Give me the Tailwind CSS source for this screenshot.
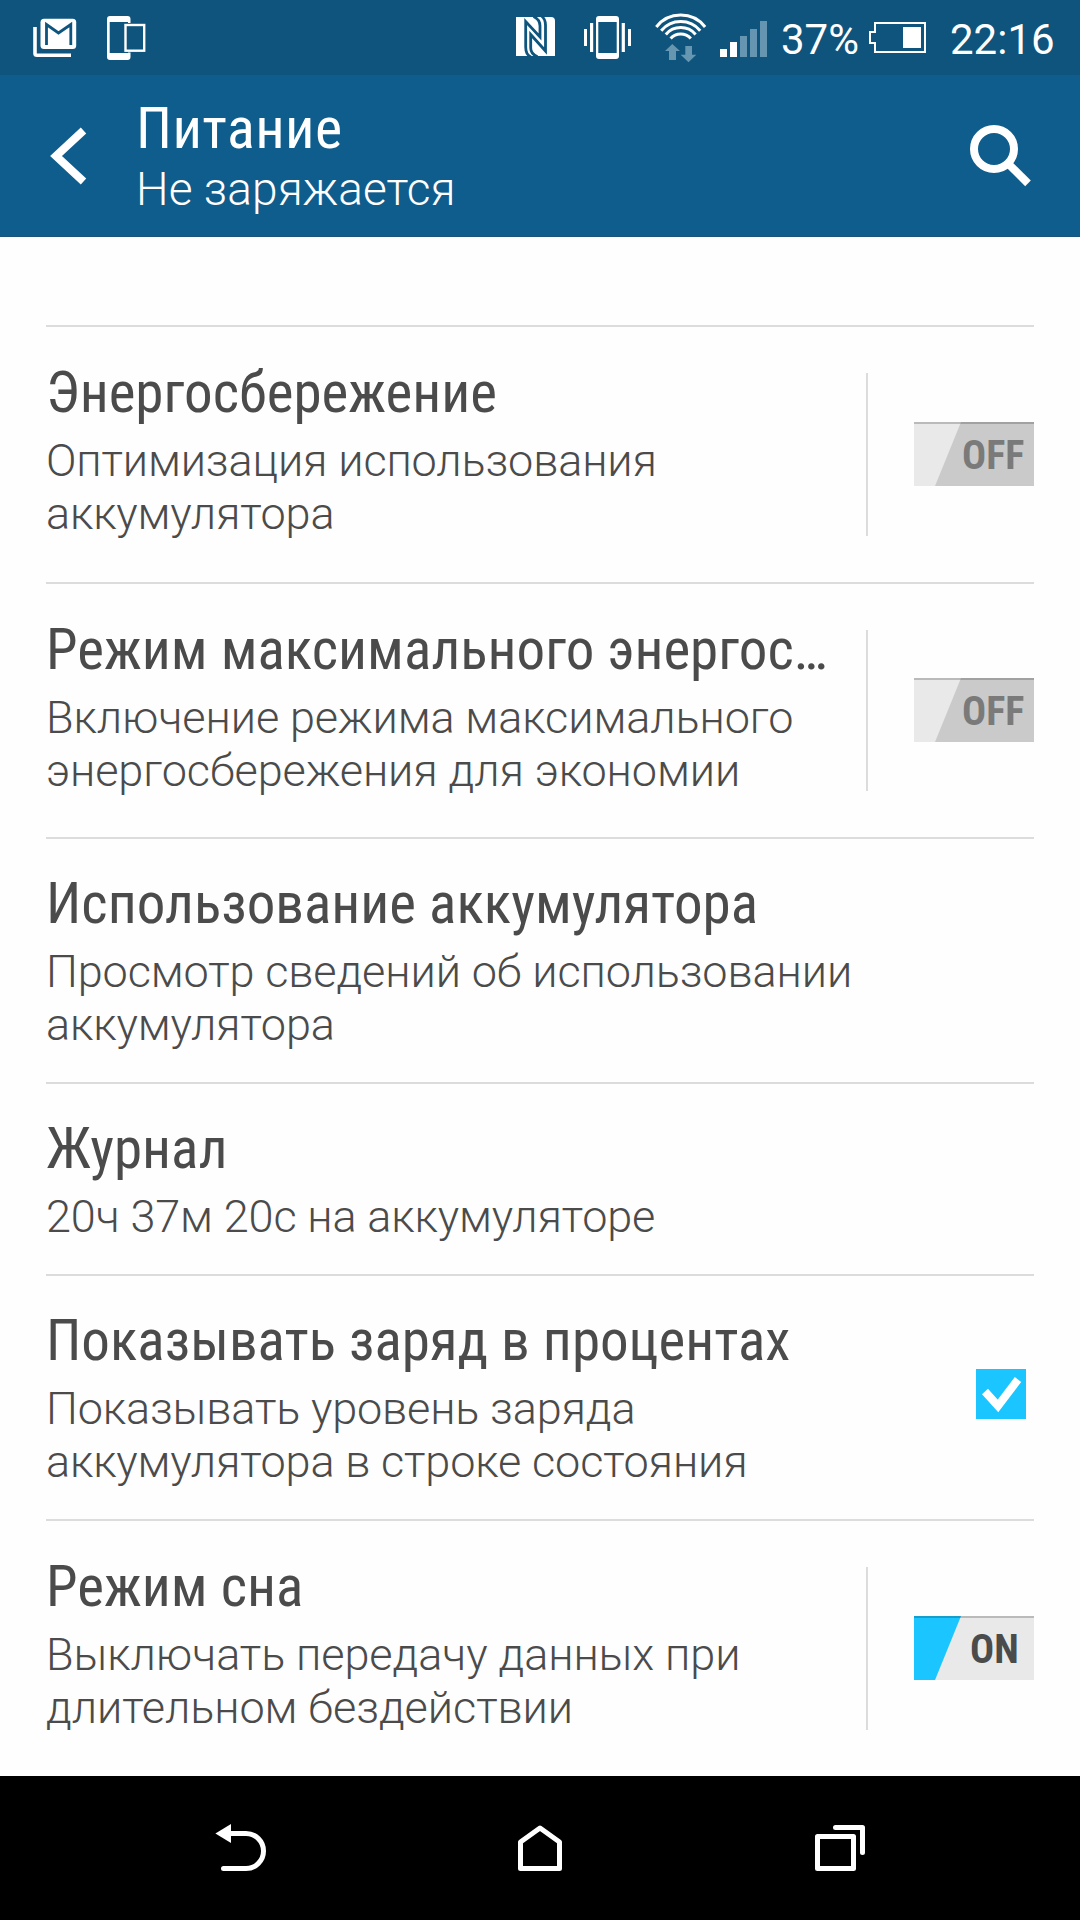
<!DOCTYPE html>
<html lang="ru">
<head>
    <meta charset="UTF-8">
    <meta name="viewport" content="width=device-width, initial-scale=1.0">
    <title>Питание</title>
    <script src="https://cdn.jsdelivr.net/npm/@tailwindcss/browser@4"></script>
</head>

<body class="bg-white">
<div class="w-[1080px] h-[1920px] flex flex-col overflow-hidden bg-[#fefefe] font-['Roboto',sans-serif] text-[#4b4b4b]">

    <!-- Status bar -->
    <div class="h-[75px] shrink-0 bg-[#0e547d] text-white flex items-start">
        <svg class="w-[44px] h-[75px] ml-[33px]" viewBox="33 0 44 75" fill="none">
            <path d="M35 27V53.500Q35 55.200 37 55.200H71" stroke="#fff" stroke-width="3.600"/>
            <rect x="40.500" y="18.700" width="35.700" height="30.300" rx="3.500" fill="#fff"/>
            <path d="M46.500 45V24.500L58.500 33L70.800 24.500V45" stroke="#0e547d" stroke-width="2.800"/>
        </svg>
        <svg class="w-[40px] h-[75px] ml-[30px]" viewBox="107 0 40 75">
            <path fill="#fff" fill-rule="evenodd" d="M110 16H127.500Q130.500 16 130.500 19V57Q130.500 60 127.500 60H110Q107 60 107 57V19Q107 16 110 16ZM109.700 22V53H128V22Z"/>
            <rect x="123.500" y="23" width="22" height="29.500" fill="#0e547d"/>
            <rect x="125.500" y="25" width="18.700" height="25.700" fill="none" stroke="#fff" stroke-width="2.400"/>
        </svg>

        <div class="flex items-start ml-auto">
            <svg class="w-[39px] h-[75px]" viewBox="0 -17 39 75" fill="none">
                <path d="M0 0H35Q39 0 39 4V39H0Z" fill="#fff"/>
                <path d="M15 40Q9.700 38 9.700 30V4.500L24 20V9Q24 2.500 17.500 -0.500" stroke="#0e547d" stroke-width="2.800"/>
                <path d="M21.500 39.800Q14.700 37 14.700 31V17.500L29.500 34V8Q29.500 2 25.500 -1" stroke="#0e547d" stroke-width="2.800"/>
            </svg>
            <svg class="w-[47px] h-[75px] ml-[29px]" viewBox="584 0 47 75" fill="#fff">
                <path fill-rule="evenodd" d="M599 16H616Q619 16 619 19V56Q619 59 616 59H599Q596 59 596 56V19Q596 16 599 16ZM598.300 22V53H616.700V22Z"/>
                <path d="M584 29h3v17h-3zM590 23h3.200v29H590zM621.700 23h3.200v29h-3.200zM628 29h3v17h-3z"/>
            </svg>
            <svg class="w-[52px] h-[75px] ml-[24px]" viewBox="655 0 52 75" fill="none" stroke="#fff" stroke-width="3">
                <path d="M656.300 27A31 31 0 0 1 705.100 27"/>
                <path d="M661.200 30.700A25.300 25.300 0 0 1 700.200 30.700"/>
                <path d="M665.800 34.500A19.500 19.500 0 0 1 695.600 34.500"/>
                <path d="M670.600 38.500A13.500 13.500 0 0 1 690.800 38.500"/>
                <path d="M672.300 44L680 51H676V60H669V51H665ZM685.300 46H692V54.700H696.300L688.500 62.300L680.700 54.700H685.300Z" fill="#6796b0" stroke="none"/>
            </svg>
            <svg class="w-[47px] h-[75px] ml-[13px]" viewBox="720 0 47 75">
                <path fill="#fff" d="M720 49h7v8h-7zM730 42h7v15h-7z"/>
                <path fill="#6695b1" d="M740 36h7v21h-7zM750 29h7v28h-7zM760 21h7v36h-7z"/>
            </svg>
            <span class="w-[88px] ml-[14px] mt-[15px] text-[42px] leading-[50px]">37%</span>
            <svg class="w-[57px] h-[75px]" viewBox="869 0 57 75">
                <path fill="none" stroke="#fff" stroke-width="2" d="M875 23H925V52H875V43H870V32H875Z"/>
                <path fill="#fff" d="M903 27h18v21h-18z"/>
            </svg>
            <span class="w-[130px] ml-[24px] mt-[15px] text-[42px] leading-[50px]">22:16</span>
        </div>
    </div>

    <!-- Header -->
    <div class="h-[162px] shrink-0 bg-[#0e5d8d] border-b border-[#1a537b] text-white flex items-start">
        <svg class="w-[38px] h-[60px] ml-[49px] mt-[51px]" viewBox="49 126 38 60" fill="none" stroke="#fff" stroke-width="8">
            <path d="M83.500 130.500L56 156L83.500 181.500"/>
        </svg>
        <div class="ml-[49px] mt-5 flex-1">
            <h1 class="text-[58px] leading-[66px] font-stretch-75% tracking-[0.4px]">Питание</h1>
            <p class="mt-px text-[46px] leading-[54px] font-light tracking-[0.1px]">Не заряжается</p>
        </div>
        <svg class="w-[64px] h-[64px] mr-[47px] mt-[48px]" viewBox="969 123 64 64" fill="none" stroke="#fff" stroke-width="8">
            <circle cx="994" cy="149" r="20"/>
            <path d="M1008 163.500L1028 183.300"/>
        </svg>
    </div>

    <!-- Settings list -->
    <div class="flex-1 px-[46px] pt-[88px]">
        <div class="h-[257px] border-t-2 border-[#dcdcdc] flex">
            <div class="flex-1 min-w-0 pt-[33px] pr-[38px]">
                <h2 class="text-[57px] leading-[66px] font-stretch-75% truncate">Энергосбережение</h2>
                <p class="mt-2 text-[45px] leading-[53px] font-light tracking-[-0.15px]">Оптимизация использования<br>аккумулятора</p>
            </div>
            <div class="w-[168px] mt-[46px] mb-[46px] border-l-2 border-[#dcdcdc] flex items-center justify-end">
                <div class="relative w-[120px] h-[64px] mb-0.5">
                    <svg class="absolute inset-0" width="120" height="64">
                        <path fill="#cacaca" d="M0 0H120V64H0Z"/>
                        <path fill="#e9e9e9" d="M0 0H47L21 64H0Z"/>
                        <path fill="#000" fill-opacity=".2" d="M0 0H120V2H0Z"/>
                    </svg>
                    <span class="relative block pl-[48px] pt-[11px] text-[40px] leading-[46px] font-bold font-stretch-75% text-[#7a7a7a]">OFF</span>
                </div>
            </div>
        </div>

        <div class="h-[255px] border-t-2 border-[#dcdcdc] flex">
            <div class="flex-1 min-w-0 pt-[33px] pr-[38px]">
                <h2 class="text-[57px] leading-[66px] font-stretch-75% truncate">Режим максимального энергос…</h2>
                <p class="mt-2 text-[45px] leading-[53px] font-light tracking-[-0.1px]">Включение режима максимального<br>энергосбережения для экономии</p>
            </div>
            <div class="w-[168px] mt-[46px] mb-[46px] border-l-2 border-[#dcdcdc] flex items-center justify-end">
                <div class="relative w-[120px] h-[64px] mb-0.5">
                    <svg class="absolute inset-0" width="120" height="64">
                        <path fill="#cacaca" d="M0 0H120V64H0Z"/>
                        <path fill="#e9e9e9" d="M0 0H47L21 64H0Z"/>
                        <path fill="#000" fill-opacity=".2" d="M0 0H120V2H0Z"/>
                    </svg>
                    <span class="relative block pl-[48px] pt-[11px] text-[40px] leading-[46px] font-bold font-stretch-75% text-[#7a7a7a]">OFF</span>
                </div>
            </div>
        </div>

        <div class="h-[245px] border-t-2 border-[#dcdcdc] pt-[32px]">
            <h2 class="text-[57px] leading-[66px] font-stretch-75%">Использование аккумулятора</h2>
            <p class="mt-2 text-[45px] leading-[53px] font-light tracking-[-0.12px]">Просмотр сведений об использовании<br>аккумулятора</p>
        </div>

        <div class="h-[192px] border-t-2 border-[#dcdcdc] pt-[32px]">
            <h2 class="text-[57px] leading-[66px] font-stretch-75%">Журнал</h2>
            <p class="mt-2 text-[45px] leading-[53px] font-light tracking-[-0.12px]">20ч 37м 20с на аккумуляторе</p>
        </div>

        <div class="h-[245px] border-t-2 border-[#dcdcdc] flex">
            <div class="flex-1 pt-[32px]">
                <h2 class="text-[57px] leading-[66px] font-stretch-75%">Показывать заряд в процентах</h2>
                <p class="mt-2 text-[45px] leading-[53px] font-light tracking-[-0.15px]">Показывать уровень заряда<br>аккумулятора в строке состояния</p>
            </div>
            <svg class="w-[50px] h-[50px] mt-[93px] mr-2 bg-[#1bc5ff]" viewBox="0 0 50 50" fill="none" stroke="#fff" stroke-width="8">
                <path d="M9 22.500L22 37L42 10.500"/>
            </svg>
        </div>

        <div class="h-[257px] border-t-2 border-[#dcdcdc] flex">
            <div class="flex-1 min-w-0 pt-[33px] pr-[38px]">
                <h2 class="text-[57px] leading-[66px] font-stretch-75% truncate">Режим сна</h2>
                <p class="mt-2 text-[45px] leading-[53px] font-light tracking-[-0.08px]">Выключать передачу данных при<br>длительном бездействии</p>
            </div>
            <div class="w-[168px] mt-[46px] mb-[46px] border-l-2 border-[#dcdcdc] flex items-center justify-end">
                <div class="relative w-[120px] h-[64px] mb-0.5">
                    <svg class="absolute inset-0" width="120" height="64">
                        <path fill="#e9e9e9" d="M0 0H120V64H0Z"/>
                        <path fill="#1bc5ff" d="M0 0H47L21 64H0Z"/>
                        <path fill="#000" fill-opacity=".2" d="M0 0H120V2H0Z"/>
                    </svg>
                    <span class="relative block pl-[56px] pt-[11px] text-[40px] leading-[46px] font-bold font-stretch-75%">ON</span>
                </div>
            </div>
        </div>
    </div>

    <!-- Navigation bar -->
    <div class="h-[144px] shrink-0 bg-black px-[90px] grid grid-cols-3 justify-items-center">
        <svg class="w-[60px] h-[144px]" viewBox="210 1776 60 144" fill="none" stroke="#fff" stroke-width="5" stroke-linecap="round">
            <path d="M229 1833.500H246A17.500 17.500 0 0 1 246 1868.500H223.500"/>
            <path d="M215.400 1833.500L231 1824V1843Z" fill="#fff" stroke="none"/>
        </svg>
        <svg class="w-[60px] h-[144px]" viewBox="510 1776 60 144" fill="none" stroke="#fff" stroke-width="5" stroke-linejoin="round">
            <path d="M520.500 1868.500V1842L540 1828L559.500 1842V1868.500Z"/>
        </svg>
        <svg class="w-[60px] h-[144px]" viewBox="810 1776 60 144" fill="none" stroke="#fff" stroke-width="5" stroke-linejoin="round" stroke-linecap="round">
            <path d="M817.500 1836.500H853.500V1868.500H817.500Z"/>
            <path d="M835.500 1827.500H862.500V1852.500"/>
        </svg>
    </div>
</div>
</body>
</html>
